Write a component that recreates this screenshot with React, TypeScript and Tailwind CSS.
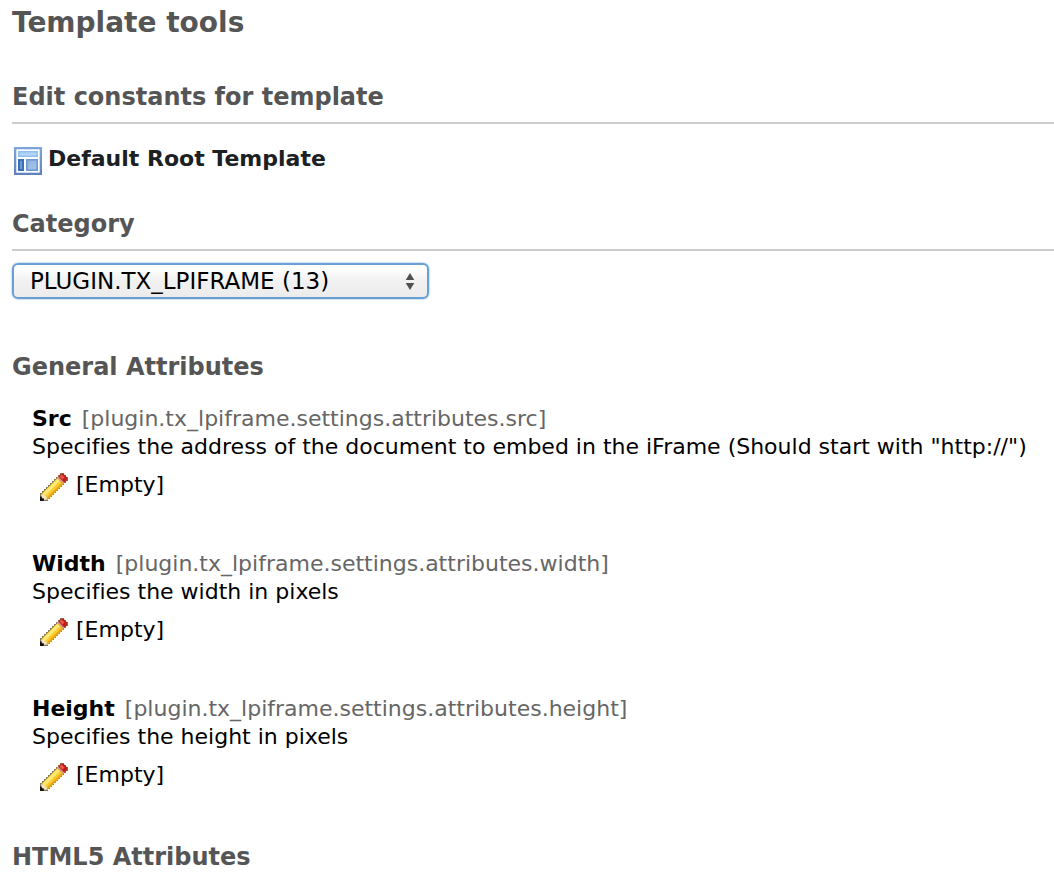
import { useState } from "react";

type Constant = { label: string; name: string; description: string };

const constants: Constant[] = [
  {
    label: "Src",
    name: "src",
    description:
      'Specifies the address of the document to embed in the iFrame (Should start with "http://")',
  },
  { label: "Width", name: "width", description: "Specifies the width in pixels" },
  { label: "Height", name: "height", description: "Specifies the height in pixels" },
];

function TemplateIcon() {
  return (
    <svg viewBox="0 0 28 28" className="size-7 shrink-0" aria-hidden="true">
      <defs>
        <linearGradient id="frame" x1="0" y1="0" x2="0" y2="1">
          <stop offset="0" stopColor="#7ba6da" />
          <stop offset="1" stopColor="#5f82bf" />
        </linearGradient>
        <linearGradient id="block" x1="0" y1="0" x2="1" y2="1">
          <stop offset="0" stopColor="#8fb2de" />
          <stop offset="1" stopColor="#a9c3e8" />
        </linearGradient>
      </defs>
      <rect width="28" height="28" rx="0.5" fill="url(#frame)" />
      <rect x="2.3" y="2.3" width="23.4" height="23.4" fill="#fff" />
      <rect x="4" y="4" width="20" height="6" fill="#8fbfee" />
      <rect x="5.5" y="5.5" width="17" height="3" fill="#b4d6f6" />
      <rect x="4" y="12" width="6" height="12" fill="#3a6fb5" />
      <rect x="6" y="14" width="2" height="8" fill="#6a9dd8" />
      <rect x="12" y="12" width="12" height="12" fill="#6f9ad2" />
      <rect x="13.7" y="13.7" width="8.6" height="8.6" fill="url(#block)" />
    </svg>
  );
}

function PencilIcon() {
  return (
    <svg viewBox="0 0 28 28" className="size-7" aria-hidden="true">
      <path
        d="M0 28V20h2v-2h2v-2h2v-2h2v-2h2v-2h2V8h2V6h2V4h2V2h2V0h4v2h2v2h2v4h-2v2h-2v2h-2v2h-2v2h-2v2h-2v2h-2v2h-2v2h-2v2H8v2Z"
        fill="#83795f"
      />
      <path d="M1.5 21 17.5 5l6 6L7.5 27Z" fill="#fccb2a" />
      <path d="M3 20.5 17.7 5.8l2.2 2.2L5.2 22.7Z" fill="#ffe978" />
      <path d="M6.2 25.2 21.5 9.9l1.6 1.6L7.8 26.6Z" fill="#e8a51c" />
      <path d="M16.8 4.8 18.8 2.8 25.2 9.2l-2 2Z" fill="#d99a80" />
      <path d="M18.2 3.6 21 .8h2.5L27.2 4.5V7l-2.8 2.8Z" fill="#bd2018" />
      <path d="M19.5 3.6 21.6 1.6l2.8 2.8-2 2Z" fill="#e45a48" />
      <path d="M1.2 26.8V21.5l2-.5 4 4-.6 1.8Z" fill="#efe4c4" />
      <path d="M0 28v-4.5h1.8v1.8h2V28Z" fill="#15120c" />
    </svg>
  );
}

function ConstantItem({ label, name, description }: Constant) {
  return (
    <section className="flex flex-col">
      <h3 className="flex flex-wrap items-baseline gap-x-2.5">
        <span className="font-bold">{label}</span>
        <span className="text-[#666]">[plugin.tx_lpiframe.settings.attributes.{name}]</span>
      </h3>
      <p>{description}</p>
      <div className="mt-2.5 flex items-center gap-2 pl-2">
        <button type="button" aria-label={`Edit ${label}`} className="mt-0.5 -mb-0.5">
          <PencilIcon />
        </button>
        <span>[Empty]</span>
      </div>
    </section>
  );
}

export default function App() {
  const [category, setCategory] = useState("lpiframe");

  return (
    <main className="overflow-hidden bg-white pt-[7px] pl-3 font-['Verdana','DejaVu_Sans',sans-serif] text-[22px] leading-7 text-black [font-variant-ligatures:none]">
      <h1 className="text-[28px] leading-8 font-bold text-[#555]">Template tools</h1>

      <h2 className="mt-11 border-b-2 border-[#ccc] pb-[11px] text-2xl leading-7 font-bold text-[#555]">
        Edit constants for template
      </h2>
      <div className="mt-[21px] flex items-center gap-1.5 pl-0.5 font-bold text-[#1b2023]">
        <span className="mt-0.5 -mb-0.5">
          <TemplateIcon />
        </span>
        <span>Default Root Template</span>
      </div>

      <h2 className="mt-[37px] border-b-2 border-[#ccc] pb-[11px] text-2xl leading-7 font-bold text-[#555]">
        <label htmlFor="category">Category</label>
      </h2>
      <div className="relative mt-3 w-[417px] max-w-full">
        <select
          id="category"
          value={category}
          onChange={(event) => setCategory(event.target.value)}
          className="block h-9 w-full appearance-none rounded-md border-2 border-[#6a9fd3] bg-linear-to-b from-white from-10% via-[#f1f1f1] via-50% to-[#ececec] pl-4 text-[23px] shadow-[0_0_2px_#6a9fd3] outline-none"
        >
          <option value="lpiframe">PLUGIN.TX_LPIFRAME (13)</option>
        </select>
        <svg
          viewBox="0 0 10 18"
          className="pointer-events-none absolute top-2.5 right-3.5 h-[18px] w-2.5"
          aria-hidden="true"
        >
          <path d="M5 0 9.3 7H.7ZM5 17 .7 10h8.6Z" fill="#505050" />
        </svg>
      </div>

      <h2 className="mt-[54px] text-2xl leading-7 font-bold text-[#555]">General Attributes</h2>
      <div className="mt-6 flex flex-col gap-[51px] pl-5">
        {constants.map((constant) => (
          <ConstantItem key={constant.name} {...constant} />
        ))}
      </div>

      <h2 className="mt-[54px] text-2xl leading-7 font-bold text-[#555]">HTML5 Attributes</h2>
    </main>
  );
}
